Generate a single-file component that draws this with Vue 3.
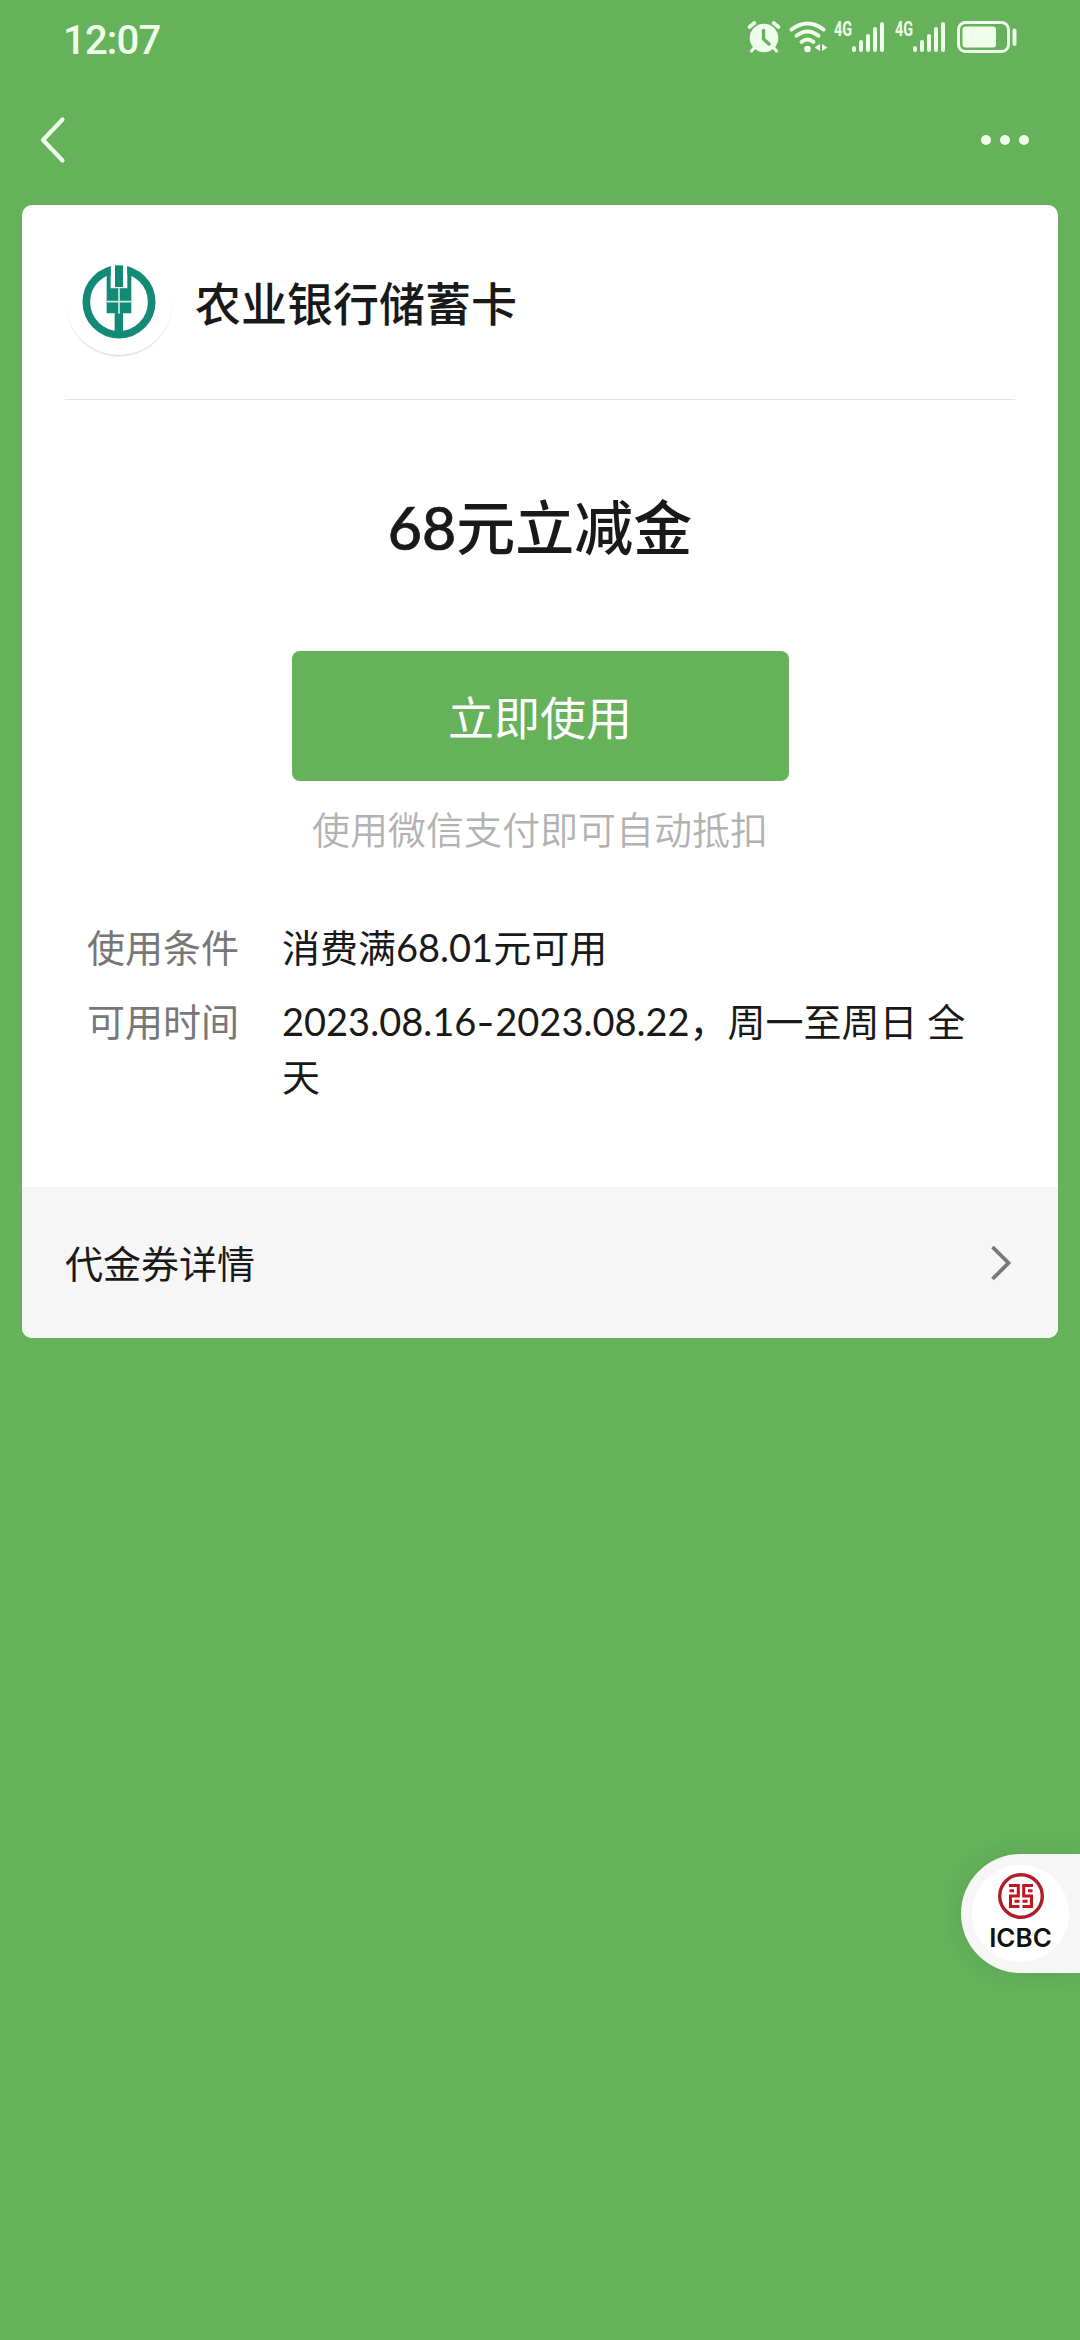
<script setup>
const conditions = [
  { label: '使用条件', lines: [['消费满68.01元可用']] },
  { label: '可用时间', lines: [['2023.08.16', '-', '2023.08.22，周一至周日 全'], ['天']] },
]
const bars = [6, 12, 18.5, 25, 30.5]
</script>

<template>
  <div class="screen">
    <header class="status">
      <span class="clock">12:07</span>
      <div class="indicators">
        <svg class="alarm" width="34" height="34" viewBox="0 0 34 34">
          <g stroke="currentColor" stroke-linecap="round" fill="none">
            <path d="M2.5 7 7.3 3M31.500 7 26.700 3" stroke-width="3.600" />
            <path d="M8 27 4.500 31M26 27 29.500 31" stroke-width="3.200" />
          </g>
          <circle cx="17" cy="18" r="14.300" fill="currentColor" />
          <path class="hand" d="M16.500 10.500V19l5.500 5" />
        </svg>
        <svg class="wifi" width="39" height="34" viewBox="0 0 39 34">
          <g fill="none" stroke="currentColor" stroke-width="3.900" stroke-linecap="round">
            <path d="M2.500 9.500Q18.500-2.500 34.500 9.500" />
            <path d="M7.500 15.800Q18.500 7.300 29.500 15.800" />
            <path d="M12.500 22Q18.500 17 24.500 22" />
          </g>
          <circle cx="18.500" cy="29" r="3.300" fill="currentColor" />
          <path d="M31 24v7l-5.500-3.500zM33 24v7l5.500-3.500z" fill="currentColor" />
        </svg>
        <div v-for="n in 2" :key="n" class="cell">
          <span class="net">4G</span>
          <div class="bars">
            <i v-for="h in bars" :key="h" :style="{ height: h + 'px' }"></i>
          </div>
        </div>
        <svg class="battery" width="60" height="32" viewBox="0 0 60 32">
          <rect x="1.500" y="1.500" width="50" height="29" rx="7" fill="none" stroke="currentColor" stroke-width="3" />
          <rect x="5.500" y="5.500" width="33.500" height="21" rx="3" fill="currentColor" />
          <rect x="55.500" y="7.500" width="4" height="17.500" rx="2" fill="currentColor" />
        </svg>
      </div>
    </header>

    <nav class="nav">
      <svg width="28" height="50" viewBox="0 0 28 50">
        <path d="M23.500 4.500 4 25 23.500 45.500" fill="none" stroke="currentColor" stroke-width="4.200" stroke-linecap="round" stroke-linejoin="round" />
      </svg>
      <div class="more"><i></i><i></i><i></i></div>
    </nav>

    <main class="card">
      <section class="issuer">
        <div class="logo">
          <svg width="74" height="74" viewBox="96 76 222 222">
            <circle cx="207" cy="187" r="98" fill="none" stroke="#128a76" stroke-width="23" />
            <path d="M182 70H232V130H182z" fill="#fff" />
            <path d="M170 84 182 79V146H232V79L244 84V221H219V290H194V221H170z" fill="#128a76" />
            <path d="M195 77H219V142H195z" fill="#128a76" />
            <path d="M170 186H244M207 146V222" stroke="#c9eee4" stroke-width="5" />
          </svg>
        </div>
        <h1>农业银行储蓄卡</h1>
      </section>

      <section class="coupon">
        <h2><span>68</span>元立减金</h2>
        <button>立即使用</button>
        <p>使用微信支付即可自动抵扣</p>
      </section>

      <dl class="rules">
        <div v-for="c in conditions" :key="c.label">
          <dt>{{ c.label }}</dt>
          <dd>
            <div v-for="(line, i) in c.lines" :key="i" class="line">
              <span v-for="part in line" :key="part" :class="{ dash: part === '-' }">{{ part }}</span>
            </div>
          </dd>
        </div>
      </dl>

      <footer class="details">
        <span>代金券详情</span>
        <svg width="22" height="36" viewBox="0 0 22 36">
          <path d="M2.500 2 18.500 18 2.500 34" fill="none" stroke="#777" stroke-width="3.800" />
        </svg>
      </footer>
    </main>

    <aside class="float">
      <div class="disc">
        <svg width="46" height="46" viewBox="0 0 46 46">
          <circle cx="23" cy="23" r="21.300" fill="none" stroke="#b01c28" stroke-width="3.400" />
          <path d="M11 12.500H20.300V23H12.500V33.500H21.500M35 12.500H25.700V23H33.500V33.500H24.500M11.500 17.800H16M34.500 17.800H30M16.500 28.300H21.500M29.500 28.300H24.500" fill="none" stroke="#c4141e" stroke-width="3" />
        </svg>
        <span>ICBC</span>
      </div>
    </aside>
  </div>
</template>

<style>
body {
  background: #65b25b;
}
</style>

<style scoped>
.screen {
  position: relative;
  box-sizing: border-box;
  width: 1080px;
  height: 2340px;
  overflow: hidden;
  background: #65b25b;
  color: #191919;
  font-family: Lato, "Noto Sans CJK SC", sans-serif;
}
h1, h2, p, dl, dd { margin: 0; }
.status {
  display: flex;
  justify-content: space-between;
  height: 80px;
  padding: 0 63px 0 63px;
  color: #effeea;
}
.clock {
  margin-top: 16px;
  font: 500 40px/50px Roboto, sans-serif;
  letter-spacing: -.8px;
}
.indicators {
  display: flex;
  align-items: flex-start;
  padding-top: 20px;
}
.indicators svg { flex: none; display: block; }
.hand { fill: none; stroke: #65b25b; stroke-width: 3.4; stroke-linecap: round; }
.wifi { margin-left: 8px; }
.cell {
  display: flex;
  width: 50px;
  height: 32px;
  margin-left: 6px;
}
.cell + .cell { margin-left: 11px; }
.net {
  width: 18px;
  font: 700 20px/18px "Roboto", sans-serif;
  transform: scaleX(.72);
  transform-origin: left;
}
.bars {
  display: flex;
  align-items: flex-end;
  gap: 3px;
}
.bars i {
  width: 4px;
  border-radius: 2px;
  background: currentColor;
}
.battery { margin: 1px 0 0 12px; }
.nav {
  display: flex;
  align-items: center;
  justify-content: space-between;
  height: 125px;
  box-sizing: border-box;
  padding: 0 51px 5px 39px;
  color: #effeea;
}
.more { display: flex; gap: 9px; }
.more i { width: 10px; height: 10px; border-radius: 50%; background: currentColor; }
.card {
  display: flex;
  flex-direction: column;
  width: 1036px;
  height: 1133px;
  margin: 0 auto;
  overflow: hidden;
  border-radius: 10px;
  background: #fff;
}
.issuer {
  display: flex;
  height: 194px;
  margin: 0 43px;
  border-bottom: 1px solid #e3e3e3;
}
.logo {
  display: flex;
  align-items: center;
  justify-content: center;
  width: 106px;
  height: 106px;
  margin: 44px 23px 0 1px;
  border-radius: 50%;
  box-shadow: 0 2px 2px -1px rgba(0, 0, 0, .2);
}
h1 { margin-top: 64px; font-size: 46px; line-height: 70px; font-weight: 500; }
.coupon {
  display: flex;
  flex-direction: column;
  align-items: center;
}
h2 { margin-top: 84px; font-size: 59px; line-height: 88px; font-weight: 500; }
h2 span { -webkit-text-stroke: .7px currentColor; }
button {
  width: 497px;
  height: 130px;
  margin-top: 79px;
  padding: 0 0 2px;
  border: 0;
  border-radius: 8px;
  background: #65b25b;
  color: #fff;
  font: 400 46px "Noto Sans CJK SC", sans-serif;
}
.coupon p { margin-top: 21px; color: #b2b2b2; font-size: 38px; line-height: 55px; font-weight: 350; }
.rules { margin: 63px 66px 0 65px; font-size: 38px; line-height: 55px; }
.rules > div { display: flex; }
.rules > div + div { margin-top: 19px; }
dt { width: 195px; flex: none; color: #777; }
.line { display: flex; white-space: pre; }
.dash { width: 19px; text-align: center; transform: scaleX(1.3); }
.details {
  display: flex;
  align-items: center;
  justify-content: space-between;
  height: 151px;
  margin-top: auto;
  padding: 0 46px 0 43px;
  background: #f6f6f6;
  font-size: 38px;
}
.details span { margin-top: -2px; }
.float {
  position: absolute;
  top: 1854px;
  right: 0;
  display: flex;
  align-items: center;
  width: 119px;
  height: 119px;
  box-sizing: border-box;
  padding-left: 11px;
  border-radius: 60px 0 0 60px;
  background: #f6f6f6;
  box-shadow: 0 0 24px rgba(0, 0, 0, .09);
}
.disc {
  display: flex;
  flex-direction: column;
  align-items: center;
  box-sizing: border-box;
  width: 97px;
  height: 97px;
  padding-top: 8px;
  border-radius: 50%;
  background: #fff;
}
.disc svg { flex: none; }
.disc span {
  margin-top: 6px;
  font: 600 26px/26px Inter, sans-serif;
  color: #111;
}
</style>
